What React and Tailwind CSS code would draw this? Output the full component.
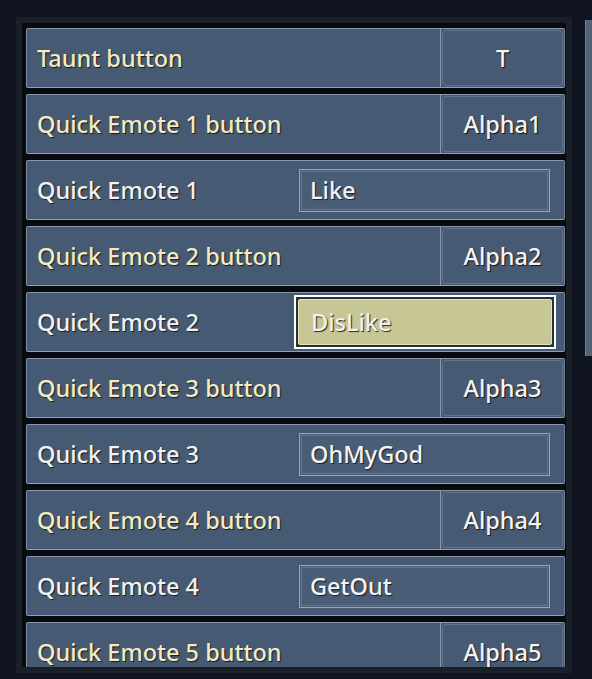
import React from "react";

const font = { fontFamily: '"Noto Sans", "Open Sans", sans-serif' };

function KeyRow({ label, keyName }) {
  return (
    <div className="h-[60px] shrink-0 flex rounded-[2px] bg-[#475a73] border border-t-[#8798ad] border-l-[#7c8ea4] border-r-[#6f8298] border-b-[#8fa0b4]">
      <div className="flex-1 flex items-center pt-[1px] pl-[10px] text-[23.5px] font-medium text-[#f1ecc4] [text-shadow:1px_1px_1px_rgba(0,0,0,0.7)]">
        {label}
      </div>
      <div className="w-[124px] border-l border-[#8a9bb0] p-[1px] flex">
        <div className="flex-1 rounded-[4px] border border-[#62758d] flex items-center justify-center pt-[1px] text-[23.5px] font-medium text-[#f4f4f4] [text-shadow:1px_1px_1px_rgba(0,0,0,0.8)]">
          {keyName}
        </div>
      </div>
    </div>
  );
}

function TextRow({ label, value, focused }) {
  return (
    <div className="h-[60px] shrink-0 flex items-center rounded-[2px] bg-[#475a73] border border-t-[#8798ad] border-l-[#7c8ea4] border-r-[#6f8298] border-b-[#8fa0b4]">
      <div className="w-[267px] flex items-center pt-[1px] pl-[10px] text-[23.5px] font-medium text-[#f2f2f2] [text-shadow:1px_1px_1px_rgba(0,0,0,0.7)]">
        {label}
      </div>
      {focused ? (
        <div className="w-[262px] h-[54px] border-2 border-white bg-[#26313d] p-[2px] flex">
          <div className="flex-1 bg-[#c6c794] border border-[#e2e2b4] rounded-[2px] flex items-center pt-[1px] pl-[12px] text-[23.5px] font-medium text-[#f2f2f2] [text-shadow:1px_1px_1px_rgba(0,0,0,0.8)]">
            {value}
          </div>
        </div>
      ) : (
        <div className="ml-[5px] w-[251px] h-[43px] border border-[#97a7b9] bg-[#4a5d76] p-[1px] flex">
          <div className="flex-1 border border-[#62758d] flex items-center pt-[1px] pl-[8px] text-[23.5px] font-medium text-[#f4f4f4] [text-shadow:1px_1px_1px_rgba(0,0,0,0.7)]">
            {value}
          </div>
        </div>
      )}
    </div>
  );
}

export default function App() {
  return (
    <div className="w-[592px] h-[679px] bg-[#0f1420] overflow-hidden flex" style={font}>
      <div className="ml-[16px] mt-[17px] w-[556px] h-[656px] shrink-0 bg-[#1b2028] p-[6px]">
        <div className="h-full bg-[#070a0e] overflow-hidden pl-[4px] pr-[1px] pt-[5px] flex flex-col gap-[6px]">
          <KeyRow label="Taunt button" keyName="T" />
          <KeyRow label="Quick Emote 1 button" keyName="Alpha1" />
          <TextRow label="Quick Emote 1" value="Like" />
          <KeyRow label="Quick Emote 2 button" keyName="Alpha2" />
          <TextRow label="Quick Emote 2" value="DisLike" focused />
          <KeyRow label="Quick Emote 3 button" keyName="Alpha3" />
          <TextRow label="Quick Emote 3" value="OhMyGod" />
          <KeyRow label="Quick Emote 4 button" keyName="Alpha4" />
          <TextRow label="Quick Emote 4" value="GetOut" />
          <KeyRow label="Quick Emote 5 button" keyName="Alpha5" />
        </div>
      </div>
      <div className="ml-[13px] mt-[20px] w-[7px] h-[336px] shrink-0 bg-[#51637b] border-l border-[#6f819a]" />
    </div>
  );
}
